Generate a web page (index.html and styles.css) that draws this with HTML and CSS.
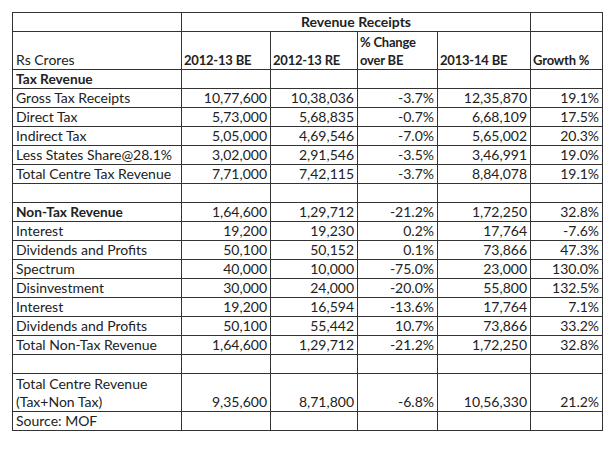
FILE: index.html
```html
<!DOCTYPE html>
<html>
<head>
<meta charset="utf-8">
<link rel="stylesheet" href="styles.css">
</head>
<body>
<table class="sheet">
  <colgroup>
    <col class="c-label"><col class="c-be"><col class="c-re"><col class="c-chg"><col class="c-be2"><col class="c-gr">
  </colgroup>
  <tr class="r1">
    <td></td>
    <td colspan="4" class="title">Revenue Receipts</td>
    <td></td>
  </tr>
  <tr class="r2">
    <td>Rs Crores</td>
    <td class="hd">2012-13 BE</td>
    <td class="hd">2012-13 RE</td>
    <td class="hd">% Change<br>over BE</td>
    <td class="hd">2013-14 BE</td>
    <td class="hd">Growth %</td>
  </tr>
  <tr><td class="sec">Tax Revenue</td><td></td><td></td><td></td><td></td><td></td></tr>
  <tr><td>Gross Tax Receipts</td><td class="n">10,77,600</td><td class="n">10,38,036</td><td class="n">-3.7%</td><td class="n">12,35,870</td><td class="n">19.1%</td></tr>
  <tr><td>Direct Tax</td><td class="n">5,73,000</td><td class="n">5,68,835</td><td class="n">-0.7%</td><td class="n">6,68,109</td><td class="n">17.5%</td></tr>
  <tr><td>Indirect Tax</td><td class="n">5,05,000</td><td class="n">4,69,546</td><td class="n">-7.0%</td><td class="n">5,65,002</td><td class="n">20.3%</td></tr>
  <tr><td>Less States Share@28.1%</td><td class="n">3,02,000</td><td class="n">2,91,546</td><td class="n">-3.5%</td><td class="n">3,46,991</td><td class="n">19.0%</td></tr>
  <tr><td>Total Centre Tax Revenue</td><td class="n">7,71,000</td><td class="n">7,42,115</td><td class="n">-3.7%</td><td class="n">8,84,078</td><td class="n">19.1%</td></tr>
  <tr><td></td><td></td><td></td><td></td><td></td><td></td></tr>
  <tr><td class="sec">Non-Tax Revenue</td><td class="n">1,64,600</td><td class="n">1,29,712</td><td class="n">-21.2%</td><td class="n">1,72,250</td><td class="n">32.8%</td></tr>
  <tr><td>Interest</td><td class="n">19,200</td><td class="n">19,230</td><td class="n">0.2%</td><td class="n">17,764</td><td class="n">-7.6%</td></tr>
  <tr><td>Dividends and Profits</td><td class="n">50,100</td><td class="n">50,152</td><td class="n">0.1%</td><td class="n">73,866</td><td class="n">47.3%</td></tr>
  <tr><td>Spectrum</td><td class="n">40,000</td><td class="n">10,000</td><td class="n">-75.0%</td><td class="n">23,000</td><td class="n">130.0%</td></tr>
  <tr><td>Disinvestment</td><td class="n">30,000</td><td class="n">24,000</td><td class="n">-20.0%</td><td class="n">55,800</td><td class="n">132.5%</td></tr>
  <tr><td>Interest</td><td class="n">19,200</td><td class="n">16,594</td><td class="n">-13.6%</td><td class="n">17,764</td><td class="n">7.1%</td></tr>
  <tr><td>Dividends and Profits</td><td class="n">50,100</td><td class="n">55,442</td><td class="n">10.7%</td><td class="n">73,866</td><td class="n">33.2%</td></tr>
  <tr><td>Total Non-Tax Revenue</td><td class="n">1,64,600</td><td class="n">1,29,712</td><td class="n">-21.2%</td><td class="n">1,72,250</td><td class="n">32.8%</td></tr>
  <tr><td></td><td></td><td></td><td></td><td></td><td></td></tr>
  <tr class="r2"><td>Total Centre Revenue<br>(Tax+Non Tax)</td><td class="n">9,35,600</td><td class="n">8,71,800</td><td class="n">-6.8%</td><td class="n">10,56,330</td><td class="n">21.2%</td></tr>
  <tr><td>Source: MOF</td><td></td><td></td><td></td><td></td><td></td></tr>
</table>
</body>
</html>
```
FILE: styles.css
```css
html, body {
  margin: 0;
  padding: 0;
  background: #ffffff;
}
body {
  padding: 12px 0 0 12px;
  font-family: "Lato", "Liberation Sans", sans-serif;
  font-size: 14px;
  color: #222222;
}
.sheet {
  border-collapse: collapse;
  table-layout: fixed;
  width: 590px;
}
.c-label { width: 169px; }
.c-be { width: 89px; }
.c-re { width: 87px; }
.c-chg { width: 80px; }
.c-be2 { width: 93px; }
.c-gr { width: 72px; }
.sheet td {
  border: 1px solid #333333;
  height: 18px;
  padding: 0 3px 0 3px;
  line-height: 18px;
  vertical-align: bottom;
  white-space: nowrap;
  overflow: hidden;
}
.sheet tr.r2 td {
  height: 37px;
}
.sheet td.hd {
  font-weight: bold;
  font-size: 13px;
  letter-spacing: -0.2px;
  padding-left: 2px;
}
.sheet td.sec {
  font-weight: bold;
  font-size: 13.7px;
}
.sheet td.title {
  font-weight: bold;
  text-align: center;
}
.sheet td.n {
  text-align: right;
  padding-right: 3px;
}
```
